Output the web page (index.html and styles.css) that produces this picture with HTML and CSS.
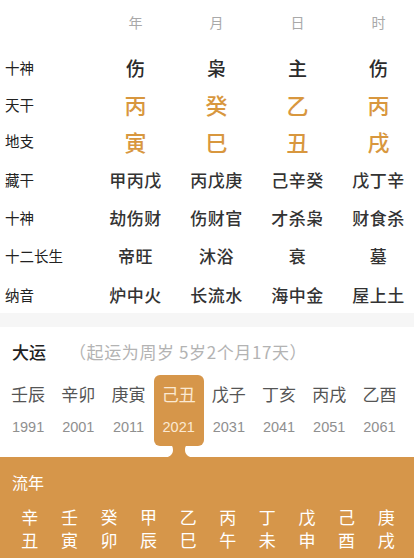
FILE: index.html
```html
<!DOCTYPE html>
<html lang="zh">
<head>
<meta charset="utf-8">
<link rel="stylesheet" href="styles.css">
</head>
<body>
<div class="page">
  <div class="pillars">
    <div class="row head"><div class="lbl"></div><div class="c">年</div><div class="c">月</div><div class="c">日</div><div class="c">时</div></div>
    <div class="row r1 god"><div class="lbl">十神</div><div class="c">伤</div><div class="c">枭</div><div class="c">主</div><div class="c">伤</div></div>
    <div class="row r2 gan"><div class="lbl">天干</div><div class="c">丙</div><div class="c">癸</div><div class="c">乙</div><div class="c">丙</div></div>
    <div class="row r3 gan"><div class="lbl">地支</div><div class="c">寅</div><div class="c">巳</div><div class="c">丑</div><div class="c">戌</div></div>
    <div class="row r4 txt"><div class="lbl">藏干</div><div class="c">甲丙戊</div><div class="c">丙戊庚</div><div class="c">己辛癸</div><div class="c">戊丁辛</div></div>
    <div class="row r5 txt"><div class="lbl">十神</div><div class="c">劫伤财</div><div class="c">伤财官</div><div class="c">才杀枭</div><div class="c">财食杀</div></div>
    <div class="row r6 txt"><div class="lbl">十二长生</div><div class="c">帝旺</div><div class="c">沐浴</div><div class="c">衰</div><div class="c">墓</div></div>
    <div class="row r7 txt"><div class="lbl">纳音</div><div class="c">炉中火</div><div class="c">长流水</div><div class="c">海中金</div><div class="c">屋上土</div></div>
  </div>
  <div class="band"></div>
  <div class="dy-title"><span class="dy-name">大运</span><span class="dy-note">（起运为周岁 5岁2个月17天）</span></div>
  <div class="dy-row">
    <div class="dy"><div class="dy-gz">壬辰</div><div class="dy-yr">1991</div></div>
    <div class="dy"><div class="dy-gz">辛卯</div><div class="dy-yr">2001</div></div>
    <div class="dy"><div class="dy-gz">庚寅</div><div class="dy-yr">2011</div></div>
    <div class="dy sel"><div class="dy-gz">己丑</div><div class="dy-yr">2021</div>
      <svg class="neck" width="34" height="14" viewBox="0 0 34 14"><path d="M6 0 H28 C24 0 23 3 23 6 C23 10 26 14 34 14 H0 C8 14 11 10 11 6 C11 3 10 0 6 0 Z" fill="#d6964a"/></svg>
    </div>
    <div class="dy"><div class="dy-gz">戊子</div><div class="dy-yr">2031</div></div>
    <div class="dy"><div class="dy-gz">丁亥</div><div class="dy-yr">2041</div></div>
    <div class="dy"><div class="dy-gz">丙戌</div><div class="dy-yr">2051</div></div>
    <div class="dy"><div class="dy-gz">乙酉</div><div class="dy-yr">2061</div></div>
  </div>
  <div class="ln">
    <div class="ln-title">流年</div>
    <div class="ln-grid">
      <span>辛</span><span>壬</span><span>癸</span><span>甲</span><span>乙</span><span>丙</span><span>丁</span><span>戊</span><span>己</span><span>庚</span>
      <span>丑</span><span>寅</span><span>卯</span><span>辰</span><span>巳</span><span>午</span><span>未</span><span>申</span><span>酉</span><span>戌</span>
    </div>
  </div>
</div>
</body>
</html>
```
FILE: styles.css
```css
html, body {
  margin: 0;
  padding: 0;
  background: #fff;
}
body {
  width: 414px;
  height: 559px;
  overflow: hidden;
  font-family: "Noto Sans CJK SC", "Noto Sans", sans-serif;
  color: #222;
}
.page {
  width: 414px;
}
.pillars {
  display: flex;
  flex-direction: column;
}
.row {
  display: grid;
  grid-template-columns: 95px 81px 81px 81px 81px;
  align-items: center;
  width: 419px;
}
.lbl {
  padding-left: 5px;
  font-size: 14.5px;
  font-weight: 400;
  color: #222;
  white-space: nowrap;
}
.c {
  text-align: center;
  white-space: nowrap;
}
.head { height: 44px; }
.head .c { font-size: 14px; color: #a9a9a9; }
.r1 { height: 38px; margin-top: 4px; }
.r2 { height: 36px; }
.r3 { height: 37px; }
.r4 { height: 40px; }
.r5 { height: 37px; }
.r6 { height: 39px; }
.r7 { height: 38px; }
.god .c { font-size: 19px; font-weight: 500; color: #2b2b2b; }
.gan .c { font-size: 22px; font-weight: 500; color: #d8973e; }
.txt .c { font-size: 17px; font-weight: 500; color: #333; letter-spacing: 0.5px; }
.band {
  height: 14px;
  background: #f6f6f6;
}
.dy-title {
  height: 48px;
  display: flex;
  align-items: center;
  padding-left: 12px;
}
.dy-name {
  font-size: 17px;
  font-weight: 500;
  color: #222;
  width: 57px;
}
.dy-note {
  font-size: 17px;
  color: #b3b3b3;
  letter-spacing: 0.6px;
}
.dy-row {
  display: flex;
  padding-left: 3px;
}
.dy {
  width: 50.2px;
  height: 71px;
  box-sizing: border-box;
  padding-top: 8px;
  display: flex;
  flex-direction: column;
  align-items: center;
  position: relative;
  border-radius: 6px;
}
.dy-gz {
  font-size: 17px;
  line-height: 22px;
  color: #555;
}
.dy-yr {
  font-family: "Liberation Sans", "Noto Sans", sans-serif;
  font-size: 14.5px;
  line-height: 20px;
  margin-top: 12px;
  color: #8f8f8f;
}
.sel {
  background: #d6964a;
}
.sel .dy-gz, .sel .dy-yr {
  color: #fbe9d2;
}
.neck {
  position: absolute;
  left: 50%;
  top: 69px;
  margin-left: -17px;
  display: block;
}
.ln {
  margin-top: 11px;
  height: 101px;
  background: #d6964a;
  color: #fff;
  padding-top: 14px;
  box-sizing: border-box;
}
.ln-title {
  padding-left: 12px;
  font-size: 16px;
  line-height: 22px;
}
.ln-grid {
  display: grid;
  grid-template-columns: repeat(10, 39.6px);
  padding-left: 10px;
  margin-top: 12px;
  font-size: 17px;
  line-height: 23px;
  text-align: center;
}
```
